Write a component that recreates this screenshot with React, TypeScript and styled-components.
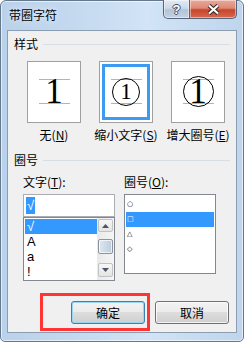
import React from 'react';
import styled, { createGlobalStyle } from 'styled-components';

const GlobalStyle = createGlobalStyle`
  html, body {
    margin: 0;
    padding: 0;
    background: #ffffff;
  }
  body {
    font-family: "Noto Sans CJK SC", "Liberation Sans", sans-serif;
    font-size: 12px;
    color: #000;
  }
`;

const Window = styled.div`
  position: relative;
  box-sizing: border-box;
  width: 244px;
  height: 342px;
  display: flex;
  flex-direction: column;
  border: 1px solid #66788c;
  border-radius: 6px 6px 5px 5px;
  background: linear-gradient(90deg, #b9d1ea 0%, #c8dcf1 40%, #d2e4f6 60%, #bed5ed 100%);
  box-shadow: inset 0 0 0 1px rgba(255, 255, 255, 0.6);
`;

const TitleBar = styled.div`
  height: 29px;
  display: flex;
  align-items: flex-start;
  padding: 0 6px 0 8px;
`;

const Title = styled.span`
  line-height: 28px;
  font-size: 12px;
  text-shadow: 0 0 6px rgba(255, 255, 255, 0.9);
`;

const Captions = styled.div`
  margin-left: auto;
  margin-top: -1px;
  display: flex;
`;

const CaptionButton = styled.div<{ $close?: boolean }>`
  box-sizing: border-box;
  width: ${({ $close }) => ($close ? 47 : 27)}px;
  height: 19px;
  display: flex;
  align-items: center;
  justify-content: center;
  border: 1px solid #56657a;
  border-top: none;
  border-left: ${({ $close }) => ($close ? 'none' : '1px solid #56657a')};
  border-radius: ${({ $close }) => ($close ? '0 0 5px 0' : '0 0 0 5px')};
  background: ${({ $close }) =>
    $close
      ? 'linear-gradient(180deg, #e9a99b 0%, #dc8a76 45%, #c9452b 55%, #d46a50 100%)'
      : 'linear-gradient(180deg, #e3ebf4 0%, #ccd9e7 45%, #b3c4d7 55%, #c4d3e3 100%)'};
  box-shadow: inset 0 0 0 1px rgba(255, 255, 255, 0.45);
`;

const HelpGlyph = styled.span`
  font-family: "Liberation Sans", sans-serif;
  font-weight: bold;
  font-size: 13px;
  line-height: 13px;
  color: #fff;
  text-shadow: 1px 0 #3d4d5f, -1px 0 #3d4d5f, 0 1px #3d4d5f, 0 -1px #3d4d5f;
`;

const Client = styled.div`
  box-sizing: border-box;
  height: 303px;
  margin: 0 6px;
  border: 1px solid #8c9db0;
  background: #f0f0f0;
  display: flex;
  flex-direction: column;
`;

const GroupHeader = styled.div<{ $top: number }>`
  display: flex;
  align-items: center;
  gap: 5px;
  height: 14px;
  line-height: 14px;
  margin: ${({ $top }) => $top}px 6px 0;
`;

const Rule = styled.div`
  flex: 1;
  height: 1px;
  background: #d5dfe5;
`;

const SampleRow = styled.div`
  display: grid;
  grid-template-columns: repeat(3, 72px);
  margin: 10px 0 0 10px;
`;

const SampleCell = styled.div`
  display: flex;
  flex-direction: column;
  align-items: center;
`;

const SampleBox = styled.div<{ $selected?: boolean }>`
  box-sizing: border-box;
  width: 54px;
  height: 62px;
  padding-top: 17px;
  border: 1px solid #a0a0a0;
  background: #fff;
  display: flex;
  justify-content: center;
  align-items: flex-start;
  box-shadow: ${({ $selected }) =>
    $selected ? 'inset 0 0 0 2px #fff, inset 0 0 0 5px #3c9bf0' : 'none'};
`;

const Guide = styled.div`
  box-sizing: border-box;
  width: 31px;
  height: 25px;
  border-top: 1px solid #b4b4b4;
  border-bottom: 1px solid #b4b4b4;
  display: flex;
  align-items: center;
  justify-content: center;
`;

const Digit = styled.span<{ $size: number }>`
  font-family: "Liberation Serif", serif;
  font-size: ${({ $size }) => $size}px;
  line-height: 1;
`;

const Ring = styled.div<{ $d: number }>`
  box-sizing: border-box;
  flex-shrink: 0;
  width: ${({ $d }) => $d}px;
  height: ${({ $d }) => $d}px;
  border: 1px solid #000;
  border-radius: 50%;
  display: flex;
  align-items: center;
  justify-content: center;
`;

const SampleLabel = styled.div`
  margin-top: 5px;
  line-height: 14px;
  white-space: nowrap;
`;

const Key = styled.span`
  text-decoration: underline;
  text-underline-offset: 1px;
`;

const Fields = styled.div`
  display: flex;
  gap: 9px;
  margin: 8px 0 0 15px;
`;

const FieldColumn = styled.div`
  width: 92px;
  display: flex;
  flex-direction: column;
`;

const FieldLabel = styled.div`
  line-height: 14px;
  margin-bottom: 5px;
  white-space: nowrap;
`;

const EditBox = styled.div`
  box-sizing: border-box;
  height: 23px;
  padding: 1px 2px;
  border: 1px solid #abadb3;
  background: #fff;
`;

const Selection = styled.span`
  display: inline-block;
  height: 17px;
  line-height: 17px;
  padding: 0 1px;
  background: #3399ff;
  color: #fff;
  font-family: "Liberation Sans", sans-serif;
  font-size: 13px;
`;

const ListBox = styled.div<{ $h: number }>`
  box-sizing: border-box;
  height: ${({ $h }) => $h}px;
  border: 1px solid #828790;
  background: #fff;
  display: flex;
`;

const ListItems = styled.div<{ $pad: string }>`
  flex: 1;
  padding: ${({ $pad }) => $pad};
  display: flex;
  flex-direction: column;
  overflow: hidden;
`;

const ListRow = styled.div<{ $selected?: boolean; $symbol?: boolean }>`
  flex-shrink: 0;
  height: 15px;
  line-height: 15px;
  padding-left: ${({ $symbol }) => ($symbol ? 1 : 2)}px;
  background: ${({ $selected }) => ($selected ? '#3399ff' : 'transparent')};
  color: ${({ $selected }) => ($selected ? '#fff' : '#000')};
  font-family: ${({ $symbol }) =>
    $symbol ? '"DejaVu Sans", sans-serif' : '"Liberation Sans", sans-serif'};
  font-size: ${({ $symbol }) => ($symbol ? 7 : 13)}px;
`;

const ScrollBar = styled.div`
  width: 17px;
  display: flex;
  flex-direction: column;
  align-items: center;
  background: linear-gradient(90deg, #e9e9e9 0%, #f5f5f5 100%);
`;

const ScrollButton = styled.div<{ $down?: boolean }>`
  box-sizing: border-box;
  width: 15px;
  height: ${({ $down }) => ($down ? 14 : 13)}px;
  margin: ${({ $down }) => ($down ? 'auto 0 3px' : '1px 0 0')};
  border: 1px solid #c2c2c2;
  border-radius: 2px;
  background: linear-gradient(180deg, #f7f7f7 0%, #e4e4e4 100%);
  display: flex;
  align-items: center;
  justify-content: center;
`;

const Thumb = styled.div`
  box-sizing: border-box;
  width: 15px;
  height: 15px;
  margin-top: 7px;
  border: 1px solid #8a939f;
  border-radius: 2px;
  background: linear-gradient(90deg, #dfe8f2 0%, #cdd9e6 50%, #bfcddc 100%);
  box-shadow: inset 0 0 0 1px rgba(255, 255, 255, 0.7);
`;

const ButtonRow = styled.div`
  margin-top: auto;
  display: flex;
  justify-content: flex-end;
  gap: 10px;
  padding: 0 7px 8px 0;
`;

const DialogButton = styled.button<{ $default?: boolean }>`
  box-sizing: border-box;
  width: 74px;
  height: 23px;
  padding: 0;
  border: 1px solid ${({ $default }) => ($default ? '#3c7fb1' : '#707070')};
  border-radius: 3px;
  background: linear-gradient(180deg, #f2f2f2 0%, #ebebeb 49%, #dddddd 50%, #cfcfcf 100%);
  box-shadow: inset 0 0 0 1px
    ${({ $default }) => ($default ? '#98d6f4' : 'rgba(255, 255, 255, 0.75)')};
  font-family: "Noto Sans CJK SC", sans-serif;
  font-size: 12px;
  color: #000;
`;

const RedMark = styled.div`
  position: absolute;
  left: 39px;
  top: 292px;
  width: 110px;
  height: 38px;
  box-sizing: border-box;
  border: 3px solid #ff3434;
  pointer-events: none;
`;

const Arrow = ({ down }: { down?: boolean }) => (
  <svg width="7" height="4" viewBox="0 0 7 4">
    <polygon points={down ? '0,0 7,0 3.5,4' : '0,4 7,4 3.5,0'} fill="#4b5563" />
  </svg>
);

const CloseGlyph = () => (
  <svg width="13" height="11" viewBox="0 0 13 11">
    <path d="M2 1.5 L11 9.5 M11 1.5 L2 9.5" stroke="#3b2622" strokeWidth="4.2" />
    <path d="M2 1.5 L11 9.5 M11 1.5 L2 9.5" stroke="#ffffff" strokeWidth="2.2" />
  </svg>
);

const characters = ['√', 'A', 'a', '!'];
const enclosures = ['○', '□', '△', '◇'];

export default function App() {
  return (
    <>
      <GlobalStyle />
      <Window>
        <TitleBar>
          <Title>带圈字符</Title>
          <Captions>
            <CaptionButton>
              <HelpGlyph>?</HelpGlyph>
            </CaptionButton>
            <CaptionButton $close>
              <CloseGlyph />
            </CaptionButton>
          </Captions>
        </TitleBar>

        <Client>
          <GroupHeader $top={6}>
            <span>样式</span>
            <Rule />
          </GroupHeader>

          <SampleRow>
            <SampleCell>
              <SampleBox>
                <Guide>
                  <Digit $size={35}>1</Digit>
                </Guide>
              </SampleBox>
              <SampleLabel>
                无(<Key>N</Key>)
              </SampleLabel>
            </SampleCell>
            <SampleCell>
              <SampleBox $selected>
                <Guide>
                  <Ring $d={28}>
                    <Digit $size={23}>1</Digit>
                  </Ring>
                </Guide>
              </SampleBox>
              <SampleLabel>
                缩小文字(<Key>S</Key>)
              </SampleLabel>
            </SampleCell>
            <SampleCell>
              <SampleBox>
                <Guide>
                  <Ring $d={31}>
                    <Digit $size={35}>1</Digit>
                  </Ring>
                </Guide>
              </SampleBox>
              <SampleLabel>
                增大圈号(<Key>E</Key>)
              </SampleLabel>
            </SampleCell>
          </SampleRow>

          <GroupHeader $top={11}>
            <span>圈号</span>
            <Rule />
          </GroupHeader>

          <Fields>
            <FieldColumn>
              <FieldLabel>
                文字(<Key>T</Key>):
              </FieldLabel>
              <EditBox>
                <Selection>√</Selection>
              </EditBox>
              <ListBox $h={64}>
                <ListItems $pad="1px 0 0 1px">
                  {characters.map((c, i) => (
                    <ListRow key={c} $selected={i === 0}>
                      {c}
                    </ListRow>
                  ))}
                </ListItems>
                <ScrollBar>
                  <ScrollButton>
                    <Arrow />
                  </ScrollButton>
                  <Thumb />
                  <ScrollButton $down>
                    <Arrow down />
                  </ScrollButton>
                </ScrollBar>
              </ListBox>
            </FieldColumn>
            <FieldColumn>
              <FieldLabel>
                圈号(<Key>O</Key>):
              </FieldLabel>
              <ListBox $h={80}>
                <ListItems $pad="2px 1px 0">
                  {enclosures.map((s, i) => (
                    <ListRow key={s} $symbol $selected={i === 1}>
                      {s}
                    </ListRow>
                  ))}
                </ListItems>
              </ListBox>
            </FieldColumn>
          </Fields>

          <ButtonRow>
            <DialogButton $default>确定</DialogButton>
            <DialogButton>取消</DialogButton>
          </ButtonRow>
        </Client>

        <RedMark />
      </Window>
    </>
  );
}
